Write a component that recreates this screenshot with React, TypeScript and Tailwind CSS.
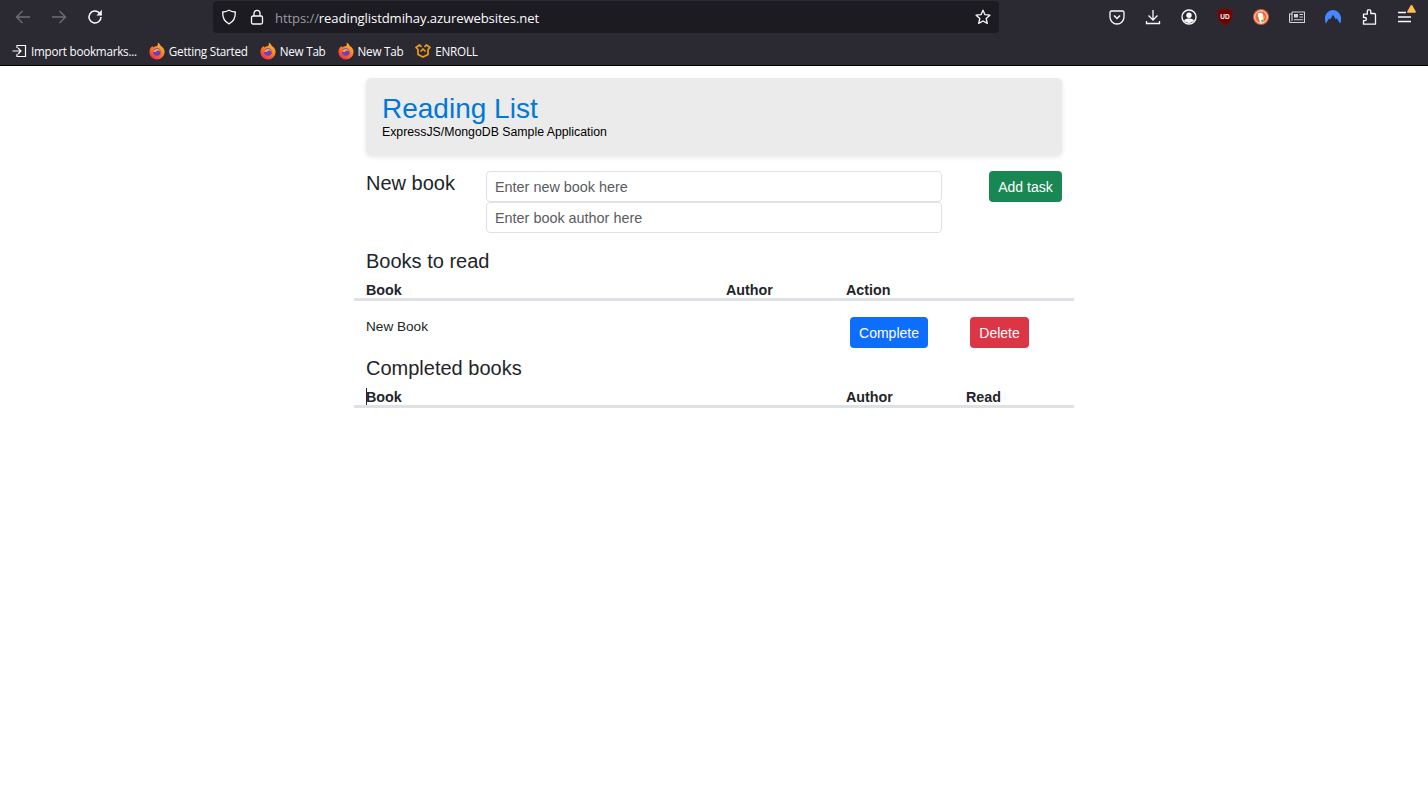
const FirefoxIcon = () => (
  <svg width="16" height="18" viewBox="0 0 16 18" className="shrink-0">
    <defs>
      <linearGradient id="ff" x1="0.8" y1="0" x2="0.2" y2="1">
        <stop offset="0" stopColor="#ffc22e" />
        <stop offset="0.5" stopColor="#ff7a1f" />
        <stop offset="1" stopColor="#f0245e" />
      </linearGradient>
    </defs>
    <path d="M8.5 0.5c2 1 3 2.2 3.2 3.6C14 5.2 15.6 7.4 15.6 10a7.6 7.6 0 0 1-15.2 0c0-2.4 1.2-4.7 3-6 .2.8.5 1.2 1 1.5C5.2 4.6 6.800 4.200 8 4.100 9 3.300 9.200 1.800 8.500 .5z" fill="url(#ff)" />
    <circle cx="8" cy="10" r="3.800" fill="#6a3fc0" />
    <path d="M4 9.500c1-1.800 3-2.700 5-2.300 1.500.3 2.700 1.400 3 2.700-1-1.200-2.400-1.700-3.500-1.400-.8.2-1.200.7-1.300 1.300C6.500 10 5 9.800 4 9.500z" fill="#ffb02e" />
  </svg>
);

const ToolButton = ({ children }: { children: React.ReactNode }) => (
  <div className="w-[36px] h-[32px] flex items-center justify-center shrink-0">{children}</div>
);

const Bookmark = ({ icon, label }: { icon: React.ReactNode; label: string }) => (
  <div className="flex items-center gap-[4px] mr-[12px]">
    {icon}
    <span className="text-[11.7px] leading-[16px] text-[#fbfbfe] font-['Open_Sans',sans-serif] tracking-[-0.25px] whitespace-nowrap">{label}</span>
  </div>
);

function BrowserChrome() {
  return (
    <div className="bg-[#2b2a33] h-[66px] border-b border-black">
      <div className="h-[34px] px-[5px] flex items-center">
        <ToolButton>
          <svg width="16" height="16" viewBox="0 0 16 16" fill="none" stroke="#6e6d75" strokeWidth="1.400">
            <path d="M15 8H1.500M7.500 2 1.500 8l6 6" />
          </svg>
        </ToolButton>
        <ToolButton>
          <svg width="16" height="16" viewBox="0 0 16 16" fill="none" stroke="#6e6d75" strokeWidth="1.400">
            <path d="M1 8h13.500M8.500 2l6 6-6 6" />
          </svg>
        </ToolButton>
        <ToolButton>
          <svg width="16" height="16" viewBox="0 0 16 16" fill="none" stroke="#fbfbfe" strokeWidth="1.500">
            <path d="M14 8a6 6 0 1 1-1.800-4.300L14.500 6" />
            <path d="M14.800 .8v5.700H9.500" fill="#fbfbfe" stroke="none" />
          </svg>
        </ToolButton>
        <div className="flex-1 mx-[100px] h-[32px] bg-[#1c1b22] rounded-[4px] flex items-center pl-[8px] pr-[8px]">
          <svg width="16" height="16" viewBox="0 0 16 16" fill="none" stroke="#fbfbfe" strokeWidth="1.300">
            <path d="M8 1.200c2 1.200 4 1.700 6.300 1.800.2 5.500-1.600 9.700-6.300 11.800C3.300 12.700 1.500 8.500 1.700 3 4 2.900 6 2.400 8 1.200z" />
          </svg>
          <svg width="16" height="16" viewBox="0 0 16 16" fill="none" stroke="#fbfbfe" strokeWidth="1.300" className="ml-[12px]">
            <rect x="2.500" y="7" width="11" height="8" rx="1.500" />
            <path d="M5 7V4.300a3 3 0 0 1 6 0V7" />
          </svg>
          <span className="ml-[10px] pt-[3px] text-[13.1px] font-['Open_Sans',sans-serif] tracking-[-0.1px] text-[#9b9ba0] whitespace-nowrap">
            https://<span className="text-[#fbfbfe]">readinglistdmihay.azurewebsites.net</span>
          </span>
          <svg width="16" height="16" viewBox="0 0 16 16" fill="none" stroke="#fbfbfe" strokeWidth="1.300" className="ml-auto">
            <path d="M8 1.200l2 4.500 4.900.5-3.700 3.300 1.100 4.900L8 12l-4.300 2.400 1.100-4.900L1.100 6.200 6 5.700z" strokeLinejoin="round" />
          </svg>
        </div>
        <ToolButton>
          <svg width="16" height="16" viewBox="0 0 16 16" fill="none" stroke="#fbfbfe" strokeWidth="1.300">
            <path d="M2.500 2h11A1.500 1.500 0 0 1 15 3.500V8A7 7 0 0 1 1 8V3.500A1.500 1.500 0 0 1 2.500 2z" />
            <path d="M5 6.500 8 9.500l3-3" strokeWidth="1.500" />
          </svg>
        </ToolButton>
        <ToolButton>
          <svg width="16" height="16" viewBox="0 0 16 16" fill="none" stroke="#fbfbfe" strokeWidth="1.300">
            <path d="M8 1v10M3.500 6.500 8 11l4.500-4.500M1.500 12v2.500h13V12" />
          </svg>
        </ToolButton>
        <ToolButton>
          <svg width="16" height="16" viewBox="0 0 16 16">
            <circle cx="8" cy="8" r="7" fill="none" stroke="#fbfbfe" strokeWidth="1.400" />
            <circle cx="8" cy="6.300" r="2.700" fill="#fbfbfe" />
            <path d="M3 11.500c1-1.600 3-2 5-2s4 .4 5 2c-1.200 1.600-3 2.500-5 2.500s-3.800-.9-5-2.500z" fill="#fbfbfe" />
          </svg>
        </ToolButton>
        <ToolButton>
          <svg width="16" height="18" viewBox="0 0 16 18">
            <path d="M8 .5 15.500 2.500c.3 7-1.800 12.500-7.500 15C2.300 15 .2 9.500.5 2.500z" fill="#800000" />
            <path d="M8 2.500 13.500 4c.2 5.500-1.300 9.500-5.500 11.500C3.800 13.500 2.300 9.500 2.500 4z" fill="#6b0000" />
            <text x="8" y="11" textAnchor="middle" fontSize="6.500" fontWeight="700" fill="#fff" fontFamily="Liberation Sans, sans-serif">UD</text>
          </svg>
        </ToolButton>
        <ToolButton>
          <svg width="16" height="16" viewBox="0 0 16 16">
            <circle cx="8" cy="8" r="8" fill="#de5833" />
            <circle cx="8" cy="8" r="6.300" fill="#f26a3d" stroke="#fff" strokeWidth="0.900" />
            <path d="M5 4.500c1.500-1.500 4.500-1 5 1 .5 1.700.2 3 .5 5 .2 1.200.5 2.500.5 3H7c-.3-1.500-.8-3-1.500-5C5 7 4.500 5.500 5 4.500z" fill="#fff" />
            <path d="M8.500 8l3-.8v1.800z" fill="#fdd20a" />
            <path d="M8 11l2.500-.5.300 2.500H8.500z" fill="#65bc46" />
          </svg>
        </ToolButton>
        <ToolButton>
          <svg width="16" height="14" viewBox="0 0 16 14" fill="none" stroke="#d4d4d8" strokeWidth="1.100">
            <path d="M3 2h12.500v10.500H1.500a1 1 0 0 1-1-1V4h2.500" />
            <path d="M3 2v9" />
            <rect x="5" y="4" width="4" height="3.500" fill="#d4d4d8" stroke="none" />
            <path d="M10.500 4.500H14M10.500 7H14M5 9.700h9" />
          </svg>
        </ToolButton>
        <ToolButton>
          <svg width="16" height="14" viewBox="0 0 16 14">
            <path d="M8 0c3.800 0 7 2.900 8 7 .4 2 .1 4.400-.9 6.500l-3.400-5.300-.9 1.300L8 4.700 5.200 9.500l-.9-1.300-3.400 5.300C-.1 11.400-.4 9 0 7 1 2.900 4.200 0 8 0z" fill="#4687ff" />
          </svg>
        </ToolButton>
        <ToolButton>
          <svg width="16" height="16" viewBox="0 0 16 16" fill="none" stroke="#fbfbfe" strokeWidth="1.300" strokeLinejoin="round">
            <path d="M7 .8h1.500c.8 0 1.300.6 1.300 1.300V4.500h3.500c.7 0 1.200.5 1.200 1.200v9.500H2.500v-3.500h1.300a1.600 1.600 0 0 0 0-3.200H2.500V5.200h3.800V2.300C6.300 1.500 6.300.8 7 .8z" />
          </svg>
        </ToolButton>
        <ToolButton>
          <div className="relative w-[16px] h-[16px]">
            <svg width="16" height="16" viewBox="0 0 16 16" stroke="#fbfbfe" strokeWidth="1.300">
              <path d="M1 3.500h8M1 8h13M1 12.500h13" />
            </svg>
            <svg width="9" height="8" viewBox="0 0 9 8" className="absolute -top-[4px] right-[-3px]">
              <path d="M4.500 0c.4 0 .7.200.9.500L8.800 6.500c.3.600-.1 1.300-.8 1.300H1c-.7 0-1.100-.7-.8-1.300L3.600.5C3.800.2 4.100 0 4.500 0z" fill="#ffbd4f" />
            </svg>
          </div>
        </ToolButton>
      </div>
      <div className="h-[31px] pl-[12px] pt-[3px] flex items-center">
        <Bookmark
          label="Import bookmarks..."
          icon={
            <svg width="15" height="14" viewBox="0 0 15 14" fill="none" stroke="#fbfbfe" strokeWidth="1.200" className="shrink-0">
              <path d="M5 4V1.500h8.500v11H5V10M.5 7h8M6 4l3 3-3 3" />
            </svg>
          }
        />
        <Bookmark label="Getting Started" icon={<FirefoxIcon />} />
        <Bookmark label="New Tab" icon={<FirefoxIcon />} />
        <Bookmark label="New Tab" icon={<FirefoxIcon />} />
        <Bookmark
          label="ENROLL"
          icon={
            <svg width="16" height="14" viewBox="0 0 16 14" fill="none" stroke="#f39c12" strokeWidth="1.700" strokeLinejoin="round" className="shrink-0">
              <path d="M6.500 2.800 4.500 1 1 3.500 3 5.500V10.500L8 13l5-2.500V5.500l2-2L11.500 1 9.500 2.800" />
              <path d="M5.500 7.500 8 5l2.500 2.500" />
            </svg>
          }
        />
      </div>
    </div>
  );
}

function HeaderRow({ columns }: { columns: { label: string; width: string; caret?: boolean }[] }) {
  return (
    <div className="-mx-3 mt-[7px] flex border-b-[3px] border-[#dee2e6] h-[21px] text-[14.3px] leading-[20px] font-bold text-[#212529]">
      {columns.map((col) => (
        <div key={col.label} className={`${col.width} px-3`}>
          <span className="relative">
            {col.caret && <span className="absolute left-0 top-[-1px] w-px h-[17px] bg-[#212529]" />}
            {col.label}
          </span>
        </div>
      ))}
    </div>
  );
}

export default function App() {
  return (
    <div className="min-h-[789px] bg-white font-['Liberation_Sans',Arial,sans-serif] text-[#212529]">
      <BrowserChrome />

      <div className="w-[720px] mx-auto px-3 pt-3">
        {/* JUMBOTRON */}
        <div className="h-[77px] bg-[#ebebeb] rounded-[5px] shadow-[0_2px_5px_rgba(0,0,0,0.1)] pl-4 pt-[15px]">
          <h1 className="text-[28px] leading-[32px] text-[#0078d7]">Reading List</h1>
          <p className="text-[12.3px] leading-[14px] text-black">ExpressJS/MongoDB Sample Application</p>
        </div>

        {/* NEW BOOK */}
        <div className="-mx-3 mt-4 flex">
          <div className="w-[120px] px-3 text-[20px] leading-[24px]">New book</div>
          <div className="w-[480px] px-3">
            <input
              placeholder="Enter new book here"
              className="block w-full h-[31px] border border-[#dee2e6] rounded-[4px] px-2 text-[14.4px] placeholder:text-[#595c5f] outline-none"
            />
            <input
              placeholder="Enter book author here"
              className="block w-full h-[31px] border border-[#dee2e6] rounded-[4px] px-2 text-[14.4px] placeholder:text-[#595c5f] outline-none"
            />
          </div>
          <div className="w-[120px] px-3 flex justify-end items-start">
            <button className="h-[31px] w-[73px] pt-px bg-[#198754] text-white text-[14px] rounded-[4px]">Add task</button>
          </div>
        </div>

        {/* BOOKS TO READ */}
        <h5 className="mt-4 text-[20px] leading-[24px]">Books to read</h5>
        <HeaderRow
          columns={[
            { label: "Book", width: "w-[360px]" },
            { label: "Author", width: "w-[120px]" },
            { label: "Action", width: "w-[240px]" },
          ]}
        />
        <div className="-mx-3 flex pt-4 text-[14px]">
          <div className="w-[480px] px-3 leading-[20px] text-[13.6px]">New Book</div>
          <div className="w-[120px] pl-[16px]">
            <button className="h-[31px] w-[78px] pt-px bg-[#0d6efd] text-white text-[14px] rounded-[4px]">Complete</button>
          </div>
          <div className="w-[120px] pl-[16px]">
            <button className="h-[31px] w-[59px] pt-px bg-[#dc3545] text-white text-[14px] rounded-[4px]">Delete</button>
          </div>
        </div>

        {/* COMPLETED */}
        <h5 className="mt-2 text-[20px] leading-[24px]">Completed books</h5>
        <HeaderRow
          columns={[
            { label: "Book", width: "w-[480px]", caret: true },
            { label: "Author", width: "w-[120px]" },
            { label: "Read", width: "w-[120px]" },
          ]}
        />
      </div>
    </div>
  );
}
